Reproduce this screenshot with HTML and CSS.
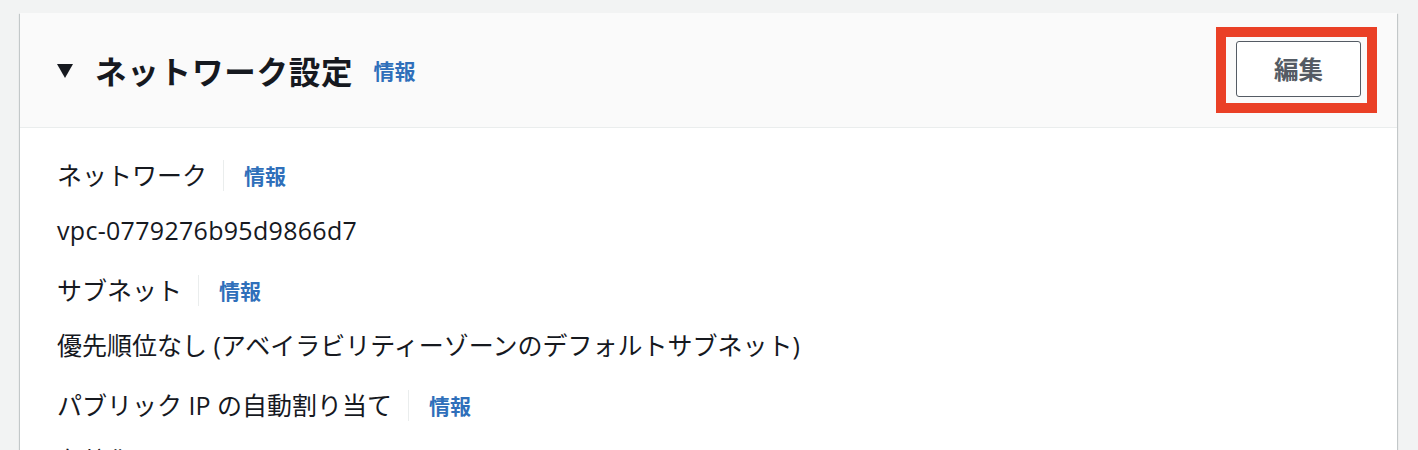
FILE: index.html
```html
<!DOCTYPE html>
<html lang="ja">
<head>
  <meta charset="UTF-8" />
  <meta name="viewport" content="width=device-width, initial-scale=1.0"/>
  <title>ネットワーク設定</title>
  <link rel="stylesheet" href="styles.css">
</head>
<body>

<div class="panel">
  <div class="panel-header">
    <div class="panel-title">
      <span class="caret"></span>
      <h2>ネットワーク設定</h2>
      <a class="info" href="#">情報</a>
    </div>
    <span class="highlight">
      <button class="btn">編集</button>
    </span>
  </div>

  <div class="panel-body">
    <!-- key / value pairs -->
    <div class="field">
      <div class="label"><span>ネットワーク</span><a class="info" href="#">情報</a></div>
      <div class="value vpc">vpc-0779276b95d9866d7</div>
    </div>

    <div class="field">
      <div class="label"><span>サブネット</span><a class="info" href="#">情報</a></div>
      <div class="value">優先順位なし (アベイラビリティーゾーンのデフォルトサブネット)</div>
    </div>

    <div class="field">
      <div class="label"><span>パブリック IP の自動割り当て</span><a class="info" href="#">情報</a></div>
      <div class="value">有効化</div>
    </div>
  </div>
</div>

</body>
</html>
```

FILE: styles.css
```css
body {
  margin: 0;
  padding: 13px 21px 0 20px;
  background: #f2f3f3;
  font-family: "Open Sans", "Noto Sans CJK JP", sans-serif;
  color: #16191f;
  overflow: hidden;
}
.panel {
  background: #fff;
  box-shadow: 0 1px 1px 0 rgba(0, 28, 36, 0.3), 1px 1px 1px 0 rgba(0, 28, 36, 0.15), -1px 1px 1px 0 rgba(0, 28, 36, 0.15);
}
.panel-header {
  height: 114px;
  background: #fafafa;
  border-bottom: 1px solid #eaeded;
  display: flex;
  align-items: center;
  justify-content: space-between;
  padding: 0 20px 0 37px;
}
.panel-title {
  display: flex;
  align-items: center;
}
.caret {
  width: 0;
  height: 0;
  border-left: 8px solid transparent;
  border-right: 8px solid transparent;
  border-top: 14px solid #16191f;
  margin-right: 22px;
  margin-top: 2px;
}
h2 {
  margin: 0 20px 0 0;
  font-family: "Noto Sans CJK JP", sans-serif;
  font-size: 31.5px;
  font-weight: 700;
  letter-spacing: 0.8px;
}
.info {
  color: #2f6fba;
  font-family: "Noto Sans CJK JP", sans-serif;
  font-weight: 700;
  font-size: 21px;
  text-decoration: none;
}
.highlight {
  display: flex;
  border: 10px solid #ea4026;
  padding: 4px 6px 6px 10px;
  margin-top: -1px;
}
.btn {
  width: 125px;
  height: 56px;
  background: #fff;
  border: 1px solid #545b64;
  border-radius: 3px;
  color: #545b64;
  font-family: "Noto Sans CJK JP", sans-serif;
  font-size: 24.5px;
  font-weight: 700;
  cursor: pointer;
}
.panel-body {
  padding: 30px 37px 40px;
  display: flex;
  flex-direction: column;
  gap: 25px;
}
.field {
  display: flex;
  flex-direction: column;
  gap: 20px;
  font-size: 25px;
  line-height: 35px;
}
.vpc {
  letter-spacing: 0.3px;
}
.label {
  display: flex;
  align-items: center;
}
.label span {
  padding-right: 16px;
  border-right: 1px solid #eaeded;
  line-height: 31px;
}
.label .info {
  margin-left: 20px;
}
```
